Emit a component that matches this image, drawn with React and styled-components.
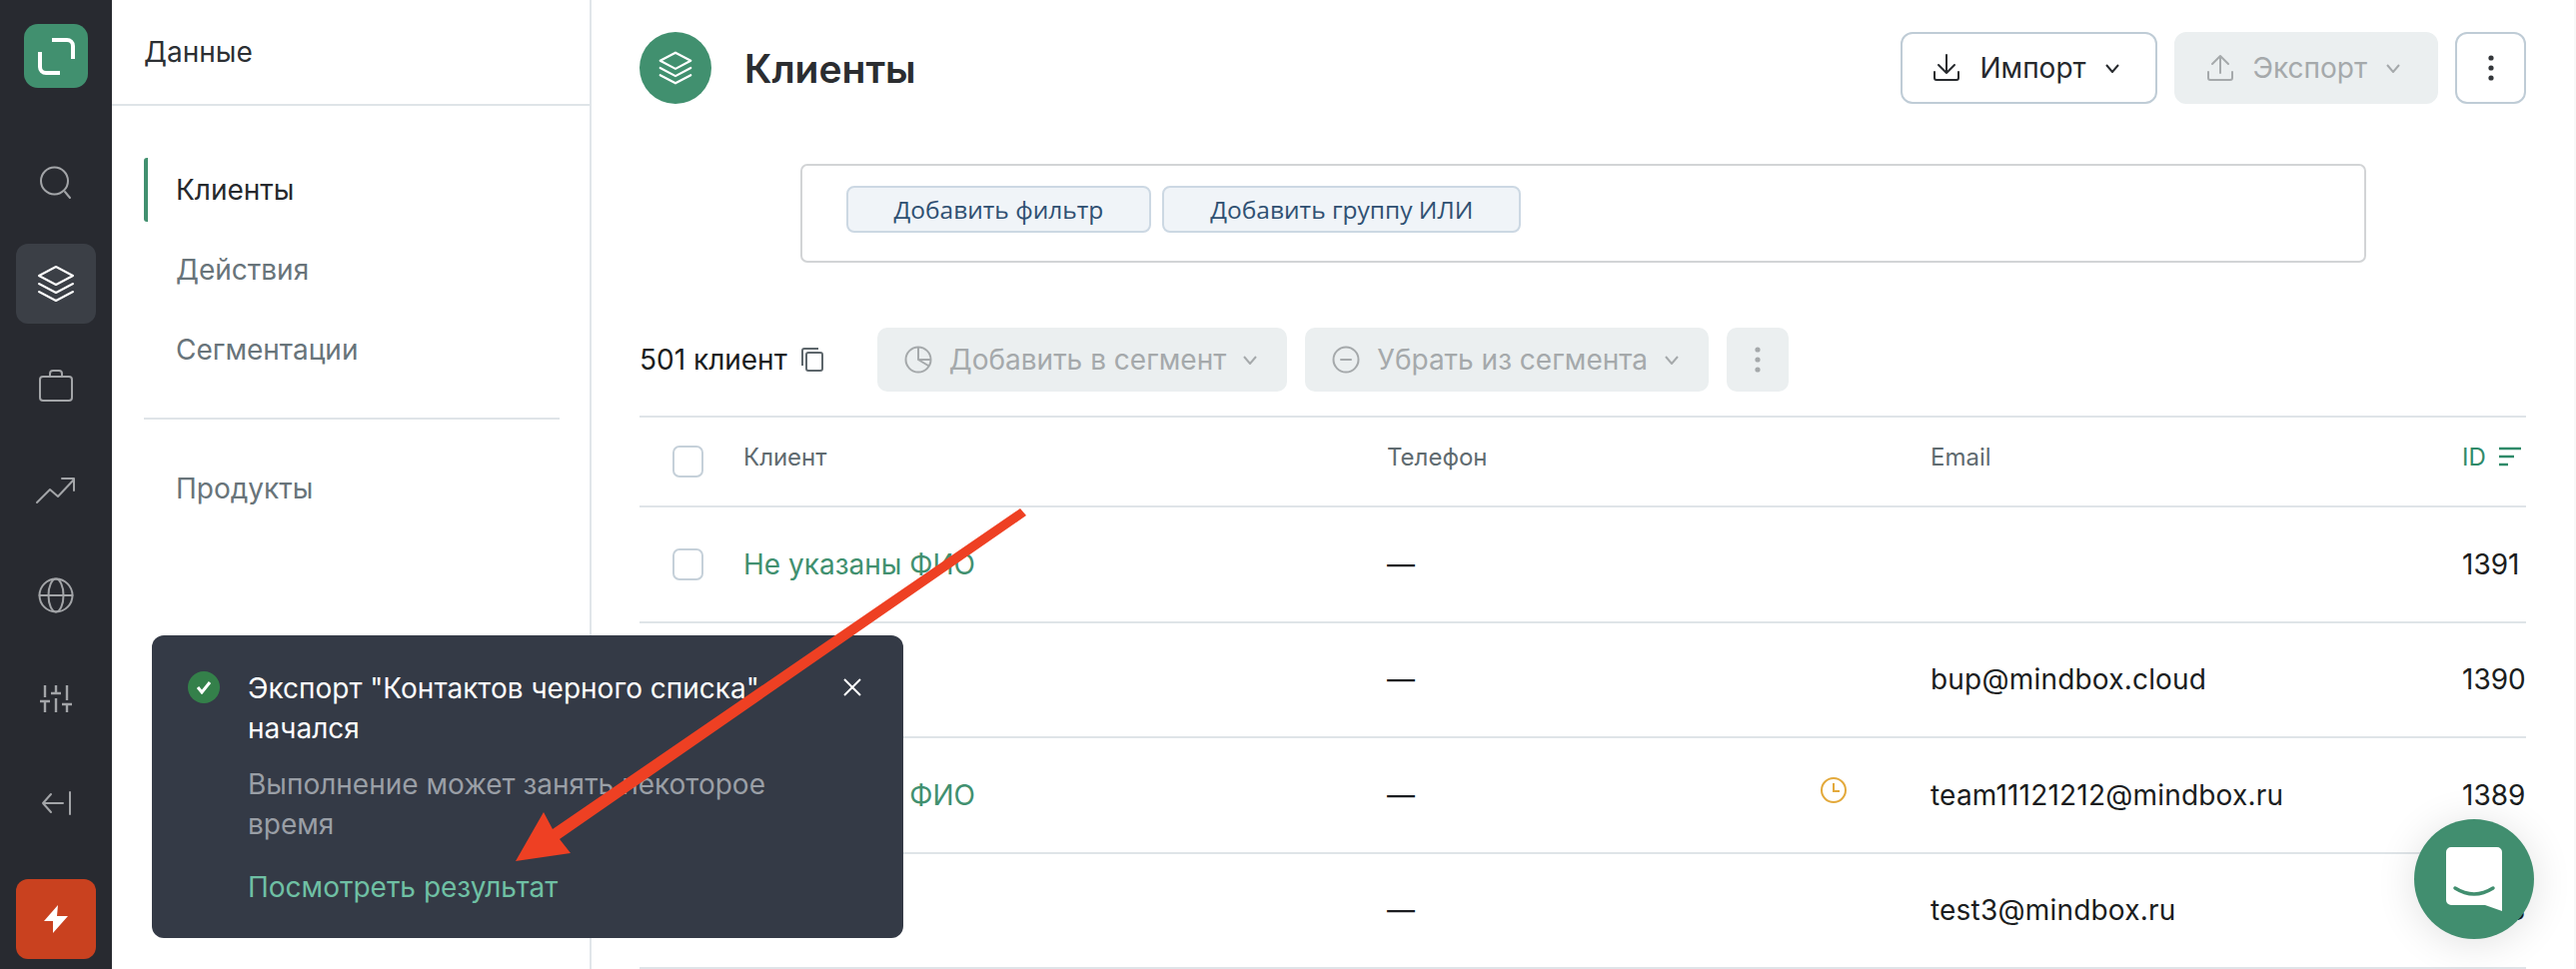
import React from 'react'
import styled, { createGlobalStyle } from 'styled-components'

const GlobalStyle = createGlobalStyle`
    * { box-sizing: border-box; }
    html, body { margin: 0; padding: 0; background: #fff; }
    body { font-family: Inter, "Noto Sans", sans-serif; color: #1f2226; }
`

const Stroke = ({ size = 36, vb = 36, w = 2, top = 0, cap = 'round', children }) => (
    <svg width={size} height={size} viewBox={`0 ${top} ${vb} ${vb}`} fill="none" stroke="currentColor" strokeWidth={w} strokeLinecap={cap} strokeLinejoin="round" overflow="visible">
        {children}
    </svg>
)

const LayersIcon = ({ size = 40, w = 2 }) => (
    <Stroke size={size} vb={40} w={w}>
        <path d="M20 3 L37 12 L20 21 L3 12 Z" />
        <path d="M3 20 L20 29 L37 20" />
        <path d="M3 28 L20 37 L37 28" />
    </Stroke>
)

const navIcons = [
    <Stroke key="s" size={36} w={2} top={-3}><circle cx="16.5" cy="16" r="13.5" /><path d="M27 27 L32 33" /></Stroke>,
    <LayersIcon key="l" />,
    <Stroke key="b" size={36} w={2} top={2}><rect x="2" y="9" width="32" height="24" rx="3" /><path d="M12 9 V6 a3 3 0 0 1 3 -3 h6 a3 3 0 0 1 3 3 V9" /></Stroke>,
    <Stroke key="t" size={40} vb={40} w={2}><path d="M1 31 L14 18 L22 25 L38 8" /><path d="M26 7 H38 V19" /></Stroke>,
    <Stroke key="g" size={36} w={2}><circle cx="18" cy="18" r="16.5" /><ellipse cx="18" cy="18" rx="7.5" ry="16.5" /><path d="M1.5 18 H34.5" /></Stroke>,
    <Stroke key="f" size={36} w={2.4} cap="butt">
        <path d="M7 4 V16 M2 20 H12 M7 20 V31" />
        <path d="M18 4 V12 M13 12 H23 M18 17 V31" />
        <path d="M29 4 V19 M24 23 H34 M29 23 V31" />
    </Stroke>,
    <Stroke key="c" size={36} w={2}><path d="M32 7 V29" /><path d="M25 18 H5 M13 9 L5 18 L13 27" /></Stroke>,
]

const Sidebar = () => (
    <SideBar>
        <Logo>
            <svg width="64" height="64" viewBox="0 0 64 64" fill="none" stroke="#fff" strokeWidth="4">
                <path d="M28 16 H43 a6 6 0 0 1 6 6 V35" />
                <path d="M16 28 V43 a6 6 0 0 0 6 6 H36" />
            </svg>
        </Logo>
        <SideNav>
            {navIcons.map((icon, i) => (
                <SideItem key={i} $active={i === 1}>{icon}</SideItem>
            ))}
        </SideNav>
        <BoltButton>
            <svg width="24" height="28" viewBox="0 0 24 28" fill="#fff">
                <path d="M14 0 L0 16 H9 L9 28 L24 11 H13 Z" />
            </svg>
        </BoltButton>
    </SideBar>
)

const SectionMenu = () => (
    <Menu>
        <MenuTitle>Данные</MenuTitle>
        <MenuList>
            <MenuItem $active>Клиенты</MenuItem>
            <MenuItem>Действия</MenuItem>
            <MenuItem>Сегментации</MenuItem>
            <MenuDivider />
            <MenuItem>Продукты</MenuItem>
        </MenuList>
    </Menu>
)

const Chevron = () => (
    <svg width="14" height="9" viewBox="0 0 14 9" fill="none" stroke="currentColor" strokeWidth="2"><path d="M1 1 L7 8 L13 1" /></svg>
)

const Dots = () => (
    <svg width="6" height="28" viewBox="0 0 6 28" fill="currentColor"><circle cx="3" cy="4" r="2.6" /><circle cx="3" cy="14" r="2.6" /><circle cx="3" cy="24" r="2.6" /></svg>
)

const PageHeader = () => (
    <TopBar>
        <TitleIcon><LayersIcon size={36} w={2.4} /></TitleIcon>
        <PageTitle>Клиенты</PageTitle>
        <TopActions>
            <ActionButton $outlined>
                <Stroke size={28} vb={28} w={2}><path d="M14 1 V19 M6 11 L14 19 L22 11" /><path d="M2 18 V24 a2 2 0 0 0 2 2 H24 a2 2 0 0 0 2 -2 V18" /></Stroke>
                <span>Импорт</span>
                <Chevron />
            </ActionButton>
            <ActionButton>
                <Stroke size={28} vb={28} w={2}><path d="M14 19 V2 M6 10 L14 2 L22 10" /><path d="M2 18 V24 a2 2 0 0 0 2 2 H24 a2 2 0 0 0 2 -2 V18" /></Stroke>
                <span>Экспорт</span>
                <Chevron />
            </ActionButton>
            <SquareButton><Dots /></SquareButton>
        </TopActions>
    </TopBar>
)

const rows = [
    { name: 'Не указаны ФИО', email: '', id: 1391 },
    { name: '', email: 'bup@mindbox.cloud', id: 1390 },
    { name: 'Не указаны ФИО', email: 'team11121212@mindbox.ru', id: 1389, pending: true },
    { name: '', email: 'test3@mindbox.ru', id: 1388 },
]

const Table = () => (
    <div>
        <HeadRow>
            <CheckCell><Checkbox /></CheckCell>
            <HeadCell>Клиент</HeadCell>
            <HeadCell>Телефон</HeadCell>
            <HeadCell>Email</HeadCell>
            <HeadCell $accent>
                ID
                <svg width="24" height="20" viewBox="0 0 24 20" fill="none" stroke="currentColor" strokeWidth="2.4">
                    <path d="M1 2 H23 M1 10 H16 M1 18 H10" />
                </svg>
            </HeadCell>
        </HeadRow>
        {rows.map(r => (
            <Row key={r.id}>
                <CheckCell><Checkbox /></CheckCell>
                <NameLink>{r.name}</NameLink>
                <PhoneCell>
                    —
                    {r.pending && (
                        <ClockMark>
                            <svg width="26" height="26" viewBox="0 0 26 26" fill="none" stroke="currentColor" strokeWidth="2">
                                <circle cx="13" cy="13" r="12" /><path d="M13 6 V14 H19" />
                            </svg>
                        </ClockMark>
                    )}
                </PhoneCell>
                <EmailCell>{r.email}</EmailCell>
                <div>{r.id}</div>
            </Row>
        ))}
    </div>
)

const Toast = () => (
    <ToastBox>
        <ToastCheck>
            <svg width="16" height="14" viewBox="0 0 16 14" fill="none" stroke="#fff" strokeWidth="3"><path d="M2 7 L6 12 L14 2" /></svg>
        </ToastCheck>
        <ToastBody>
            <ToastTitle>Экспорт "Контактов черного списка" начался</ToastTitle>
            <ToastText>Выполнение может занять некоторое время</ToastText>
            <ToastLink>Посмотреть результат</ToastLink>
        </ToastBody>
        <ToastClose>
            <svg width="18" height="18" viewBox="0 0 18 18" fill="none" stroke="#fff" strokeWidth="2"><path d="M1 1 L17 17 M17 1 L1 17" /></svg>
        </ToastClose>
    </ToastBox>
)

const App = () => (
    <Page>
        <GlobalStyle />
        <Sidebar />
        <SectionMenu />
        <Main>
            <PageHeader />
            <FilterBox>
                <FilterButton>Добавить фильтр</FilterButton>
                <FilterButton>Добавить группу ИЛИ</FilterButton>
            </FilterBox>
            <CountRow>
                <CountText>501 клиент</CountText>
                <CopyMark>
                    <svg width="22" height="24" viewBox="0 0 22 24" fill="none" stroke="currentColor" strokeWidth="2">
                        <rect x="5" y="5" width="16" height="18" rx="2" /><path d="M1 18 V3 a2 2 0 0 1 2 -2 H17" />
                    </svg>
                </CopyMark>
                <SegmentButton>
                    <Stroke size={28} vb={28} w={2}><circle cx="14" cy="14" r="12.5" /><path d="M14 2 V14 L24 20 M14 14 H26" /></Stroke>
                    <span>Добавить в сегмент</span>
                    <Chevron />
                </SegmentButton>
                <SegmentButton>
                    <Stroke size={28} vb={28} w={2}><circle cx="14" cy="14" r="12.5" /><path d="M9 14 H19" /></Stroke>
                    <span>Убрать из сегмента</span>
                    <Chevron />
                </SegmentButton>
                <SegmentSquare><Dots /></SegmentSquare>
            </CountRow>
            <Table />
        </Main>
        <ScrollStrip />
        <Toast />
        <ChatButton>
            <svg width="56" height="64" viewBox="0 0 56 64" fill="none">
                <path d="M5 0 H51 a5 5 0 0 1 5 5 V64 L39 58 H5 a5 5 0 0 1 -5 -5 V5 a5 5 0 0 1 5 -5 Z" fill="#fff" />
                <path d="M9 41 Q28 53 47 41" stroke="#418e6f" strokeWidth="3.5" strokeLinecap="round" />
            </svg>
        </ChatButton>
        <ArrowLayer width="2578" height="970" viewBox="0 0 2578 970">
            <polygon points="1021,509 1027,516 560,840 571,854 516,862 544,813 553,830" fill="#ee4023" />
        </ArrowLayer>
    </Page>
)

const Page = styled.div`
    position: relative;
    display: flex;
    width: 2578px;
    height: 970px;
    overflow: hidden;
    background: #fff;
`
const SideBar = styled.aside`
    flex: 0 0 112px;
    display: flex;
    flex-direction: column;
    align-items: center;
    padding: 24px 0 10px;
    background: #282a30;
`
const Logo = styled.div`
    width: 64px;
    height: 64px;
    border-radius: 14px;
    background: #41906f;
    line-height: 0;
`
const SideNav = styled.nav`
    display: flex;
    flex-direction: column;
    gap: 24px;
    margin-top: 52px;
`
const SideItem = styled.div`
    width: 80px;
    height: 80px;
    display: flex;
    align-items: center;
    justify-content: center;
    border-radius: 12px;
    color: ${p => (p.$active ? '#fff' : '#a3a5a8')};
    background: ${p => (p.$active ? '#3b3f46' : 'transparent')};
`
const BoltButton = styled.div`
    width: 80px;
    height: 80px;
    margin-top: auto;
    display: flex;
    align-items: center;
    justify-content: center;
    border-radius: 12px;
    background: #c9411f;
`
const Menu = styled.section`
    flex: 0 0 480px;
    border-right: 2px solid #e1e6ea;
`
const MenuTitle = styled.div`
    height: 106px;
    padding: 34px 32px 0;
    font-size: 28px;
    line-height: 36px;
    color: #2c2f33;
    border-bottom: 2px solid #dfe4e8;
`
const MenuList = styled.div`
    padding: 52px 30px 0 32px;
`
const MenuItem = styled.div`
    height: 64px;
    margin-bottom: 16px;
    padding-left: 28px;
    font-size: 28px;
    line-height: 64px;
    color: ${p => (p.$active ? '#26292d' : '#68747a')};
    border-left: 4px solid ${p => (p.$active ? '#41906f' : 'transparent')};
    border-radius: 3px;
`
const MenuDivider = styled.div`
    height: 2px;
    margin: 36px 0 37px;
    background: #dfe4e8;
`
const Main = styled.main`
    flex: 1;
    min-width: 0;
    padding: 32px 50px 0 48px;
`
const TopBar = styled.header`
    display: flex;
    align-items: center;
    height: 72px;
`
const TitleIcon = styled.div`
    width: 72px;
    height: 72px;
    display: flex;
    align-items: center;
    justify-content: center;
    border-radius: 50%;
    color: #fff;
    background: #41906f;
`
const PageTitle = styled.h1`
    margin: 0 0 0 33px;
    font-size: 39px;
    font-weight: 600;
    color: #2b2d30;
`
const TopActions = styled.div`
    display: flex;
    gap: 17px;
    margin-left: auto;
`
const ActionButton = styled.div`
    height: 72px;
    display: flex;
    align-items: center;
    gap: 19px;
    padding: 0 36px 0 30px;
    border-radius: 12px;
    font-size: 28px;
    color: ${p => (p.$outlined ? '#26292d' : '#a5a9ab')};
    background: ${p => (p.$outlined ? '#fff' : '#ebeff0')};
    border: 2px solid ${p => (p.$outlined ? '#bfccd6' : '#ebeff0')};
`
const SquareButton = styled.div`
    width: 71px;
    height: 72px;
    display: flex;
    align-items: center;
    justify-content: center;
    color: #34373b;
    border: 2px solid #bfccd6;
    border-radius: 12px;
`
const FilterBox = styled.div`
    width: 1567px;
    height: 99px;
    display: flex;
    gap: 11px;
    margin: 60px auto 0;
    padding: 20px 44px;
    border: 2px solid #d2d4d6;
    border-radius: 7px;
`
const FilterButton = styled.div`
    height: 47px;
    padding: 0 46px;
    font-family: "Open Sans", sans-serif;
    font-size: 24.5px;
    line-height: 43px;
    color: #2f5072;
    background: #f0f4f8;
    border: 2px solid #ccd8e3;
    border-radius: 8px;
`
const CountRow = styled.div`
    display: flex;
    align-items: center;
    height: 64px;
    margin-top: 65px;
`
const CountText = styled.div`
    font-size: 28px;
    color: #1b1d20;
`
const CopyMark = styled.div`
    margin: 0 54px 0 14px;
    line-height: 0;
    color: #5d666b;
`
const SegmentButton = styled.div`
    height: 64px;
    display: flex;
    align-items: center;
    gap: 17px;
    margin-right: 18px;
    padding: 0 30px 0 27px;
    border-radius: 10px;
    font-size: 28px;
    color: #a5a9ab;
    background: #ebeff0;
`
const SegmentSquare = styled.div`
    width: 62px;
    height: 64px;
    display: flex;
    align-items: center;
    justify-content: center;
    border-radius: 10px;
    color: #a5a9ab;
    background: #ebeff0;
`
const tableColumns = '104px 644px 544px 532px 1fr'
const HeadRow = styled.div`
    display: grid;
    grid-template-columns: ${tableColumns};
    align-items: center;
    height: 92px;
    margin-top: 24px;
    border-top: 2px solid #dfe4e8;
    border-bottom: 2px solid #dfe4e8;
`
const HeadCell = styled.div`
    display: flex;
    align-items: center;
    gap: 12px;
    margin-top: -10px;
    font-size: 24px;
    color: ${p => (p.$accent ? '#2f8a69' : '#5f6b70')};
`
const Row = styled.div`
    display: grid;
    grid-template-columns: ${tableColumns};
    align-items: center;
    height: 115.5px;
    font-size: 28px;
    color: #1b1d20;
    white-space: nowrap;
    border-bottom: 2px solid #dfe4e8;
`
const CheckCell = styled.div`
    padding-left: 33px;
    line-height: 0;
`
const Checkbox = styled.span`
    display: inline-block;
    width: 31px;
    height: 32px;
    border: 2px solid #c5d0d9;
    border-radius: 7px;
    background: #fff;
`
const NameLink = styled.div`
    color: #41906f;
`
const PhoneCell = styled.div`
    display: flex;
    align-items: center;
    justify-content: space-between;
    padding-right: 84px;
`
const EmailCell = styled.div`
    letter-spacing: 0.2px;
`
const ClockMark = styled.span`
    margin-top: -10px;
    line-height: 0;
    color: #e3a93b;
`
const ScrollStrip = styled.div`
    position: absolute;
    top: 0;
    right: 0;
    bottom: 0;
    width: 2px;
    background: #f8f8f8;
`
const ToastBox = styled.div`
    position: absolute;
    left: 152px;
    top: 636px;
    width: 752px;
    display: flex;
    padding: 33px 42px 31px 36px;
    border-radius: 12px;
    background: #343a46;
`
const ToastCheck = styled.div`
    flex: 0 0 32px;
    height: 32px;
    margin: 3px 28px 0 0;
    display: flex;
    align-items: center;
    justify-content: center;
    border-radius: 50%;
    background: #34804a;
`
const ToastBody = styled.div`
    flex: 1;
    font-size: 28px;
    line-height: 40px;
`
const ToastTitle = styled.div`
    color: #fff;
`
const ToastText = styled.div`
    margin-top: 16px;
    color: #9a9fa6;
`
const ToastLink = styled.div`
    margin-top: 23px;
    color: #6fc0a4;
`
const ToastClose = styled.div`
    flex: 0 0 18px;
    margin: 10px 0 0 30px;
    line-height: 0;
`
const ChatButton = styled.div`
    position: absolute;
    left: 2416px;
    top: 820px;
    width: 120px;
    height: 120px;
    display: flex;
    align-items: center;
    justify-content: center;
    border-radius: 50%;
    background: #418e6f;
    box-shadow: 0 4px 40px rgba(0, 0, 0, 0.12);
`
const ArrowLayer = styled.svg`
    position: absolute;
    left: 0;
    top: 0;
    pointer-events: none;
`

export default App
